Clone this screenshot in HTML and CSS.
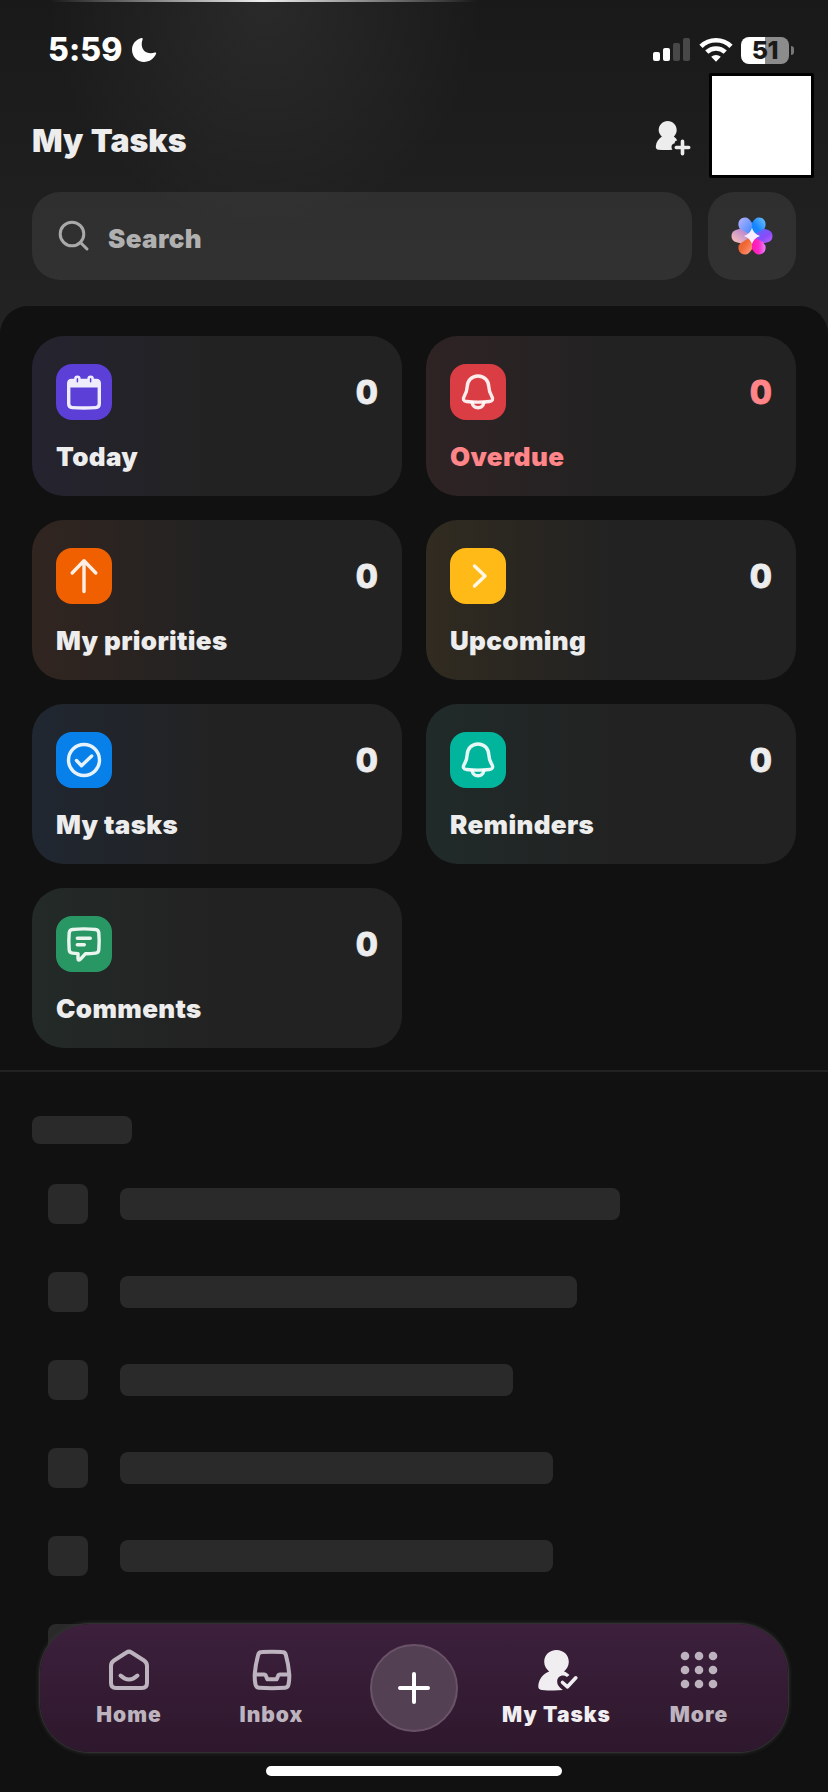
FILE: index.html
```html
<!DOCTYPE html>
<html lang="en">
<head>
<meta charset="utf-8">
<title>My Tasks</title>
<link rel="stylesheet" href="styles.css">
</head>
<body>
<svg class="defs" width="0" height="0">
  <defs>
    <symbol id="bell" viewBox="0 0 56 56">
      <path d="M28 12c-6.300 0-10.500 4.600-10.800 10.700-.2 4.500-1 6.500-3 9.600-1.700 2.800-.7 4.900 2.300 5.200 7.500.8 15.500.8 23 0 3-.3 4-2.400 2.300-5.200-2-3.100-2.800-5.100-3-9.600C38.500 16.600 34.300 12 28 12z"/>
      <path d="M22 38.500c.7 3.200 3 5.200 6 5.200s5.300-2 6-5.200"/>
    </symbol>
  </defs>
</svg>
<main class="screen">
  <header class="header">
    <div class="status">
      <div class="clock">
        <span class="time">5:59</span>
        <svg class="moon" width="26" height="26" viewBox="0 0 26 26"><path d="M10.300 1C4.700 2.500 1 7.100 1 12.700 1 19.600 6.300 25 13 25c5.300 0 10-3.300 12.100-8.200.4-1-.4-1.700-1.300-1.300-1.300.5-2.600.7-4 .7-5.700 0-9.100-3.500-9.100-9.100 0-1.700.3-3.200.9-4.600.4-1-.3-1.700-1.300-1.500z" fill="#fff"/></svg>
      </div>
      <div class="indicators">
        <svg width="37" height="24" viewBox="0 0 37 24"><g fill="#fff"><rect y="14" width="7" height="9" rx="2"/><rect x="10" y="10" width="7" height="13" rx="2"/></g><g fill="#484848"><rect x="20" y="5" width="7" height="18" rx="2"/><rect x="30" width="7" height="23" rx="2"/></g></svg>
        <svg class="wifi" width="34" height="26" viewBox="0 0 34 26"><g fill="none" stroke="#fff" stroke-width="4.600"><path d="M2 9.300a21.500 21.500 0 0 1 30 0"/><path d="M7.800 15.200a13.200 13.200 0 0 1 18.400 0"/></g><path d="M12.200 19.800a7 7 0 0 1 9.600 0L17 24.800z" fill="#fff"/></svg>
        <div class="battery">51</div>
        <div class="battery-tip"></div>
      </div>
    </div>
    <div class="title-row">
      <h1 class="title">My Tasks</h1>
      <svg class="add-person" width="36" height="36" viewBox="0 0 36 36"><path d="M12.700 1c5 0 9 4 9 9 0 2.700-1.100 4.700-2.900 6.600 1.500 1.100 2.700 2.500 3.500 4-2 .3-2.500 1-2.600 2.600-2 .3-3.200 1.600-3.200 3.600 0 1.300.5 2.200 1 3-4.800.3-9.500.2-14 0C1.700 29.600.7 28.500.8 26.500c.4-4.300 2.600-7.600 6.100-9.900C5 14.700 3.700 12.700 3.700 10c0-5 4-9 9-9z" fill="#ededed"/><path d="M27.500 21.300v12.400M21.300 27.500h12.400" stroke="#ededed" stroke-width="3.600" stroke-linecap="round"/></svg>
    </div>
    <div class="avatar"></div>
    <div class="search-row">
      <div class="search">
        <svg width="32" height="32" viewBox="0 0 32 32" fill="none" stroke="#a9a9a9" stroke-width="3" stroke-linecap="round"><circle cx="14" cy="14" r="11.800"/><path d="M22.700 22.700l6.300 6.300"/></svg>
        <span>Search</span>
      </div>
      <div class="assistant">
        <svg width="44" height="40" viewBox="-22 -20 44 40">
          <defs>
            <linearGradient id="p1" x1="0" y1="0" x2="1" y2="1"><stop offset="0" stop-color="#b9b4ff"/><stop offset="1" stop-color="#3686ff"/></linearGradient>
            <linearGradient id="p2" x1="1" y1="0" x2="0" y2="1"><stop offset="0" stop-color="#72c5ff"/><stop offset=".6" stop-color="#1686ff"/></linearGradient>
            <linearGradient id="p3" x1="0" y1="0" x2="1" y2="1"><stop offset="0" stop-color="#4f72ff"/><stop offset=".6" stop-color="#8a4bf8"/><stop offset="1" stop-color="#bd66ff"/></linearGradient>
            <linearGradient id="p4" x1="0" y1="0" x2="1" y2="0"><stop offset="0" stop-color="#ff18ae"/><stop offset=".5" stop-color="#fa28c8"/><stop offset="1" stop-color="#e987ff"/></linearGradient>
            <linearGradient id="p5" x1="0" y1="0" x2="1" y2="1"><stop offset="0" stop-color="#dc5c30"/><stop offset=".5" stop-color="#f26a35"/><stop offset="1" stop-color="#ff9c91"/></linearGradient>
            <linearGradient id="p6" x1="1" y1="0" x2="0" y2="1"><stop offset="0" stop-color="#a474d8"/><stop offset="1" stop-color="#ffc4b5"/></linearGradient>
          </defs>
          <path d="M0 0L0-13C-2-16.500-4-18.500-7-18.500-12-18.500-14.500-14-13.300-9.500-12.500-5-6-2 0 0z" fill="url(#p1)"/>
          <path d="M0 0L0-13C2-16.500 4-18.500 7-18.500 12-18.500 14.500-14 13.300-9.500 12.500-5 6-2 0 0z" fill="url(#p2)"/>
          <path d="M0 0L11-7C16-7 20.500-5 20.500 0S16 7 11 7z" fill="url(#p3)"/>
          <path d="M0 0L0 13C2 16.500 4 18.500 7 18.500 12 18.500 14.500 14 13.300 9.500L11 6z" fill="url(#p4)"/>
          <path d="M0 0L0 13C-2 16.500-4 18.500-7 18.500-12 18.500-14.500 14-13.300 9.500L-11 6z" fill="url(#p5)"/>
          <path d="M0 0L-11-7C-16-7-20.500-5-20.500 0S-16 7-11 7z" fill="url(#p6)"/>
          <path d="M0-8Q2-2 8 0 2 2 0 8-2 2-8 0-2-2 0-8z" fill="#f7edff"/>
        </svg>
      </div>
    </div>
  </header>

  <section class="sheet">
    <div class="cards">
      <article class="card today"><div class="card-top"><div class="tile"><svg viewBox="0 0 56 56"><path d="M12.700 22v-2.500q0-3 3-3h24.600q3 0 3 3v20.300q0 3.500-3.500 3.800-11.800.8-23.600 0-3.500-.3-3.500-3.800z"/><path d="M12.700 23.500v-4.500q0-3 4-3h22.600q4 0 4 3v4.500z" class="solid"/><rect x="19.400" y="12.700" width="4" height="7" rx="2" class="ring"/><rect x="32.600" y="12.700" width="4" height="7" rx="2" class="ring"/></svg></div><span class="count">0</span></div><div class="label">Today</div></article>
      <article class="card overdue"><div class="card-top"><div class="tile"><svg viewBox="0 0 56 56"><use href="#bell"/></svg></div><span class="count">0</span></div><div class="label">Overdue</div></article>
      <article class="card priorities"><div class="card-top"><div class="tile"><svg viewBox="0 0 56 56"><path d="M28 43.500V12.800M16.200 25L28 12.800 39.800 25"/></svg></div><span class="count">0</span></div><div class="label">My priorities</div></article>
      <article class="card upcoming"><div class="card-top"><div class="tile"><svg viewBox="0 0 56 56"><path d="M24.500 18L35 28 24.500 38"/></svg></div><span class="count">0</span></div><div class="label">Upcoming</div></article>
      <article class="card tasks"><div class="card-top"><div class="tile"><svg viewBox="0 0 56 56"><circle cx="28" cy="28" r="15.500"/><path d="M20.500 28.500l5 5.200L35.700 24"/></svg></div><span class="count">0</span></div><div class="label">My tasks</div></article>
      <article class="card reminders"><div class="card-top"><div class="tile"><svg viewBox="0 0 56 56"><use href="#bell"/></svg></div><span class="count">0</span></div><div class="label">Reminders</div></article>
      <article class="card comments"><div class="card-top"><div class="tile"><svg viewBox="0 0 56 56"><path d="M16.500 13.500q11.500-1.200 23 0 3 .3 3.300 3.300.8 8.500 0 17-.3 3-3.300 3.300-5 .5-10 .6l-5 5.500c-1.300 1.400-2.500.9-2.500-.8v-4.800l-5.500-.5q-3-.3-3.300-3.300-.8-8.500 0-17 .3-3 3.300-3.300z"/><path d="M21.300 22.200h13M21.300 28.800h7"/></svg></div><span class="count">0</span></div><div class="label">Comments</div></article>
    </div>
    <div class="skeleton">
      <div class="sk sk-heading"></div>
      <div class="sk-row"><div class="sk sk-box"></div><div class="sk sk-bar" style="width:500px"></div></div>
      <div class="sk-row"><div class="sk sk-box"></div><div class="sk sk-bar" style="width:457px"></div></div>
      <div class="sk-row"><div class="sk sk-box"></div><div class="sk sk-bar" style="width:393px"></div></div>
      <div class="sk-row"><div class="sk sk-box"></div><div class="sk sk-bar" style="width:433px"></div></div>
      <div class="sk-row"><div class="sk sk-box"></div><div class="sk sk-bar" style="width:433px"></div></div>
      <div class="sk-row"><div class="sk sk-box"></div></div>
    </div>
  </section>

  <footer class="dock">
    <nav class="nav">
      <a class="nav-item"><svg width="44" height="44" viewBox="0 0 44 44"><path d="M19.500 4.500q2.500-1.700 5 0l12.500 8q3 2 3 5.500v17q0 5-5 5H9q-5 0-5-5V18q0-3.500 3-5.500z"/><path d="M13.500 27.500q8.500 8 17 0"/></svg><span>Home</span></a>
      <a class="nav-item"><svg width="44" height="44" viewBox="0 0 44 44"><path d="M12 4q10-.5 20 0 3.500 0 4 3.500 2.500 9 3.300 19 .2 5-.8 10-.5 3-3.500 3.200-13 .9-26 0-3-.2-3.500-3.200-1-5-.8-10 .8-10 3.300-19Q8.500 4 12 4z"/><path d="M5 26.500h9q1.500 0 2 1.500l1.300 3.300h9.400l1.300-3.300q.5-1.500 2-1.500h9"/></svg><span>Inbox</span></a>
      <a class="nav-item"><div class="plus"><svg width="36" height="36" viewBox="0 0 36 36"><path d="M18 4v28M4 18h28"/></svg></div></a>
      <a class="nav-item active"><svg width="44" height="44" viewBox="0 0 44 44"><path d="M21.500 2c7 0 12.300 5 12.300 11.800 0 4.200-2 7.300-4.800 9.800 2.100.7 4 1.900 5.500 3.500l-2.600 1.800c-4.500-3-9.700-.4-9.700 4.600 0 4 2.500 6 5.800 8.600-7 .5-14.500.4-21.300-.2-2.500-.2-3.600-1.700-3.400-4.200.5-6.500 4.700-11.800 10.900-14.100-3-2.500-5-5.600-5-9.800C9.200 7 14.500 2 21.500 2z" class="fill"/><path d="M27.500 34.500l5 4.300 8.300-9" class="tick"/></svg><span>My Tasks</span></a>
      <a class="nav-item"><svg width="44" height="44" viewBox="0 0 44 44"><g class="fill"><circle cx="8" cy="8" r="4.300"/><circle cx="22" cy="8" r="4.300"/><circle cx="36" cy="8" r="4.300"/><circle cx="8" cy="22" r="4.300"/><circle cx="22" cy="22" r="4.300"/><circle cx="36" cy="22" r="4.300"/><circle cx="8" cy="36" r="4.300"/><circle cx="22" cy="36" r="4.300"/><circle cx="36" cy="36" r="4.300"/></g></svg><span>More</span></a>
    </nav>
    <div class="home-indicator"></div>
  </footer>
</main>
</body>
</html>
```
FILE: styles.css
```css
* { box-sizing: border-box; }
body { margin: 0; background: #111; font-family: Inter, "Liberation Sans", sans-serif; font-weight: 800; color: #ededed; }
.defs { position: absolute; }
.screen { position: relative; width: 828px; height: 1792px; overflow: hidden; background: linear-gradient(#191919, #232323 335px, #111 336px); }
.header { position: relative; height: 306px; padding: 0 32px; background: radial-gradient(ellipse 220px 230px at 265px 0, rgba(255,255,255,.07), transparent); }
.header::before { content: ""; position: absolute; top: 0; left: 50px; width: 426px; height: 2px; background: linear-gradient(90deg, transparent, #eee 50%, transparent); }

.status { height: 100px; display: flex; justify-content: space-between; align-items: center; padding-left: 16px; }
.clock { display: flex; align-items: center; gap: 8px; color: #fff; }
.time { font-size: 32px; font-weight: 800; line-height: 40px; letter-spacing: .1px; }
.indicators { display: flex; align-items: center; padding-right: 2px; }
.wifi { margin-left: 9px; margin-right: 8px; }
.battery { width: 48px; height: 27px; border-radius: 8px; background: linear-gradient(90deg, #fff 50%, #8c8c8c 50%); color: #1a1a1a; font-size: 25px; font-weight: 800; line-height: 27px; text-align: center; letter-spacing: -.5px; }
.battery-tip { width: 3px; height: 9px; margin-left: 2px; border-radius: 0 4px 4px 0; background: #777; }
.title-row { height: 81px; display: flex; justify-content: space-between; align-items: center; padding-right: 105px; }
.title { margin: 0; font-size: 32px; font-weight: 900; line-height: 40px; letter-spacing: 0; word-spacing: 1px; }
.add-person { margin-top: -6px; }
.avatar { position: absolute; left: 709px; top: 73px; width: 105px; height: 105px; border: 3px solid #000; border-radius: 2px; background: #fff; }
.search-row { display: flex; gap: 16px; padding-top: 11px; }
.search { flex: 1; height: 88px; border-radius: 28px; background: rgba(255,255,255,.075); display: flex; align-items: center; gap: 18px; padding-left: 26px; font-size: 26px; font-weight: 900; letter-spacing: .35px; color: #b0b0b0; }
.search svg { margin-top: -1px; }
.search span { padding-top: 5px; }
.assistant { width: 88px; height: 88px; border-radius: 26px; background: rgba(255,255,255,.075); display: flex; align-items: center; justify-content: center; }

.sheet { height: 1486px; border-radius: 28px 28px 0 0; background: #111; padding-top: 30px; }
.cards { display: grid; grid-template-columns: 370px 370px; grid-auto-rows: 160px; gap: 24px; padding: 0 32px 22px; border-bottom: 2px solid #222; }
.card { border-radius: 32px; padding: 28px 24px 0; background: linear-gradient(90deg, var(--tint), #222 50%); }
.card-top { display: flex; justify-content: space-between; align-items: center; }
.tile { width: 56px; height: 56px; border-radius: 16px; background: var(--tile); }
.tile svg { display: block; width: 56px; height: 56px; fill: none; stroke: rgba(255,255,255,.9); stroke-width: 3.400; stroke-linecap: round; stroke-linejoin: round; }
.tile .solid { fill: #efedfb; stroke: none; }
.tile .ring { fill: var(--tile); stroke: #efedfb; stroke-width: 2.500; }
.count { padding-top: 1px; font-size: 32px; font-weight: 800; line-height: 40px; -webkit-text-stroke: .8px currentColor; }
.label { margin-top: 21px; font-size: 26px; font-weight: 900; line-height: 32px; letter-spacing: .35px; white-space: nowrap; }
.today { --tile: #5b3fd6; --tint: #25232f; }
.overdue { --tile: #da3d43; --tint: #2f2324; }
.overdue .count, .overdue .label { color: #ff8589; }
.priorities { --tile: #f06000; --tint: #312520; }
.upcoming { --tile: #ffba18; --tint: #312b20; }
.tasks { --tile: #0880ea; --tint: #202731; }
.reminders { --tile: #00b59c; --tint: #202b29; }
.comments { --tile: #299764; --tint: #232a27; }

.skeleton { padding: 44px 32px 0; }
.sk { background: #2a2a2a; border-radius: 8px; }
.sk-heading { width: 100px; height: 28px; margin-bottom: 16px; }
.sk-row { display: flex; align-items: center; gap: 32px; height: 88px; padding-left: 16px; }
.sk-box { width: 40px; height: 40px; }
.sk-bar { height: 32px; }

.dock { position: absolute; left: 40px; top: 1624px; width: 748px; }
.nav { height: 128px; border-radius: 50px; background: linear-gradient(#3c203c, #2e182d); box-shadow: 0 0 0 1px #303030, 0 0 4px 1px #333; display: grid; grid-template-columns: repeat(5, 142.5px); justify-content: center; }
.nav-item { display: flex; flex-direction: column; align-items: center; padding-top: 24px; color: #bdb3be; font-size: 21px; font-weight: 900; line-height: 24px; letter-spacing: 1px; }
.nav-item span { margin-top: 11px; white-space: nowrap; }
.nav-item svg { fill: none; stroke: #bdb3be; stroke-width: 4; stroke-linecap: round; stroke-linejoin: round; }
.nav-item .fill { fill: #bdb3be; stroke: none; }
.nav-item.active { color: #f1eef2; }
.nav-item.active .fill { fill: #f1eef2; }
.nav-item .tick { stroke: #f1eef2; stroke-width: 3.600; }
.plus { width: 88px; height: 88px; margin-top: -4px; border-radius: 50%; border: 2px solid #6a5369; background: #544053; display: flex; align-items: center; justify-content: center; }
.plus svg { stroke: #fff; }
.home-indicator { width: 296px; height: 10px; margin: 14px auto 0; border-radius: 5px; background: #fff; }
```
